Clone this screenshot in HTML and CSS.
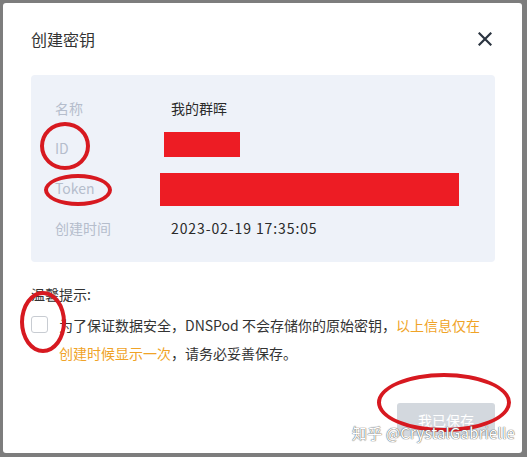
FILE: index.html
```html
<!DOCTYPE html>
<html lang="zh">
<head>
<meta charset="utf-8">
<link rel="stylesheet" href="styles.css">
</head>
<body>
<div class="page">
  <div class="dialog">
    <div class="header">
      <h1 class="title">创建密钥</h1>
      <svg class="close" width="14" height="14" viewBox="0 0 14 14"><path d="M1.5 1.5 L12.5 12.5 M12.5 1.5 L1.5 12.5" stroke="#2b3440" stroke-width="2.2" stroke-linecap="square"/></svg>
    </div>
    <div class="info">
      <div class="row"><span class="label">名称</span><span class="value">我的群晖</span></div>
      <div class="row"><span class="label">ID</span><span class="value"><span class="redact redact-id"></span></span></div>
      <div class="row"><span class="label">Token</span><span class="value"><span class="redact redact-token"></span></span></div>
      <div class="row"><span class="label">创建时间</span><span class="value date">2023-02-19 17:35:05</span></div>
    </div>
    <div class="tips">
      <div class="tips-title">温馨提示:</div>
      <div class="tips-body">
        <span class="checkbox"></span>
        <p class="tips-text">为了保证数据安全，DNSPod 不会存储你的原始密钥，<span class="warn">以上信息仅在创建时候显示一次</span>，请务必妥善保存。</p>
      </div>
    </div>
    <div class="footer">
      <button class="btn">我已保存</button>
    </div>
    <span class="mark mark-id"></span>
    <span class="mark mark-token"></span>
    <span class="mark mark-check"></span>
    <span class="mark mark-btn"></span>
    <span class="watermark">知乎 @CrystalGabrielle</span>
  </div>
</div>
</body>
</html>
```

FILE: styles.css
```css
* { box-sizing: border-box; }
html, body { margin: 0; padding: 0; }
body {
  width: 527px;
  height: 457px;
  overflow: hidden;
  background: #7d7d7d;
  font-family: "Noto Sans CJK SC", "Noto Sans", sans-serif;
}
.page {
  padding: 3px 0 0 3px;
}
.dialog {
  position: relative;
  width: 519px;
  height: 450px;
  background: #fff;
  border-radius: 3px;
  padding: 0 27px 0 28px;
}
.header {
  display: flex;
  align-items: center;
  justify-content: space-between;
  height: 72px;
  padding-right: 1px;
}
.title {
  margin: 0;
  font-size: 16px;
  font-weight: 400;
  color: #333;
  line-height: 24px;
}
.close { margin-right: 2px; }
.info {
  background: #eef2f9;
  border-radius: 4px;
  height: 187px;
  padding: 13px 0 0 24px;
}
.row {
  display: flex;
  align-items: center;
  height: 40px;
  font-size: 14px;
}
.label {
  width: 116px;
  color: #b5bdcc;
}
.value {
  color: #2a2a2a;
  display: flex;
  align-items: center;
}
.date { letter-spacing: 0.9px; }
.redact { display: block; background: #ed1c24; }
.redact-id { width: 76px; height: 25px; margin-left: -7px; margin-bottom: 7px; }
.redact-token { width: 299px; height: 33px; margin-left: -11px; margin-top: 3px; }
.tips {
  padding-top: 20px;
}
.tips-title {
  font-size: 14px;
  color: #333;
  line-height: 24px;
}
.tips-body {
  display: flex;
  align-items: flex-start;
  margin-top: 5px;
}
.checkbox {
  flex: none;
  width: 17px;
  height: 17px;
  border: 1px solid #c8ccd2;
  border-radius: 3px;
  background: #fff;
  margin-top: 5px;
}
.tips-text {
  margin: 0 0 0 11px;
  width: 428px;
  font-size: 14px;
  line-height: 28px;
  color: #333;
}
.warn { color: #f0a327; }
.footer {
  display: flex;
  justify-content: flex-end;
  margin-top: 36px;
}
.btn {
  width: 98px;
  height: 33px;
  border: none;
  border-radius: 3px;
  background: #d3d8de;
  color: #fff;
  font-family: inherit;
  font-size: 14px;
  padding: 0;
}
.mark {
  position: absolute;
  border: 4px solid #d71920;
  border-radius: 50%;
}
.mark-id { left: 37px; top: 119px; width: 50px; height: 48px; }
.mark-token { left: 41px; top: 171px; width: 68px; height: 32px; }
.mark-check { left: 17px; top: 288px; width: 46px; height: 62px; }
.mark-btn { left: 374px; top: 370px; width: 134px; height: 59px; }
.watermark {
  position: absolute;
  left: 349px;
  top: 419px;
  font-size: 15px;
  letter-spacing: 0.2px;
  color: #fff;
  text-shadow: 0 0 1px #555, 0 0 1px #555;
  white-space: nowrap;
}
```
